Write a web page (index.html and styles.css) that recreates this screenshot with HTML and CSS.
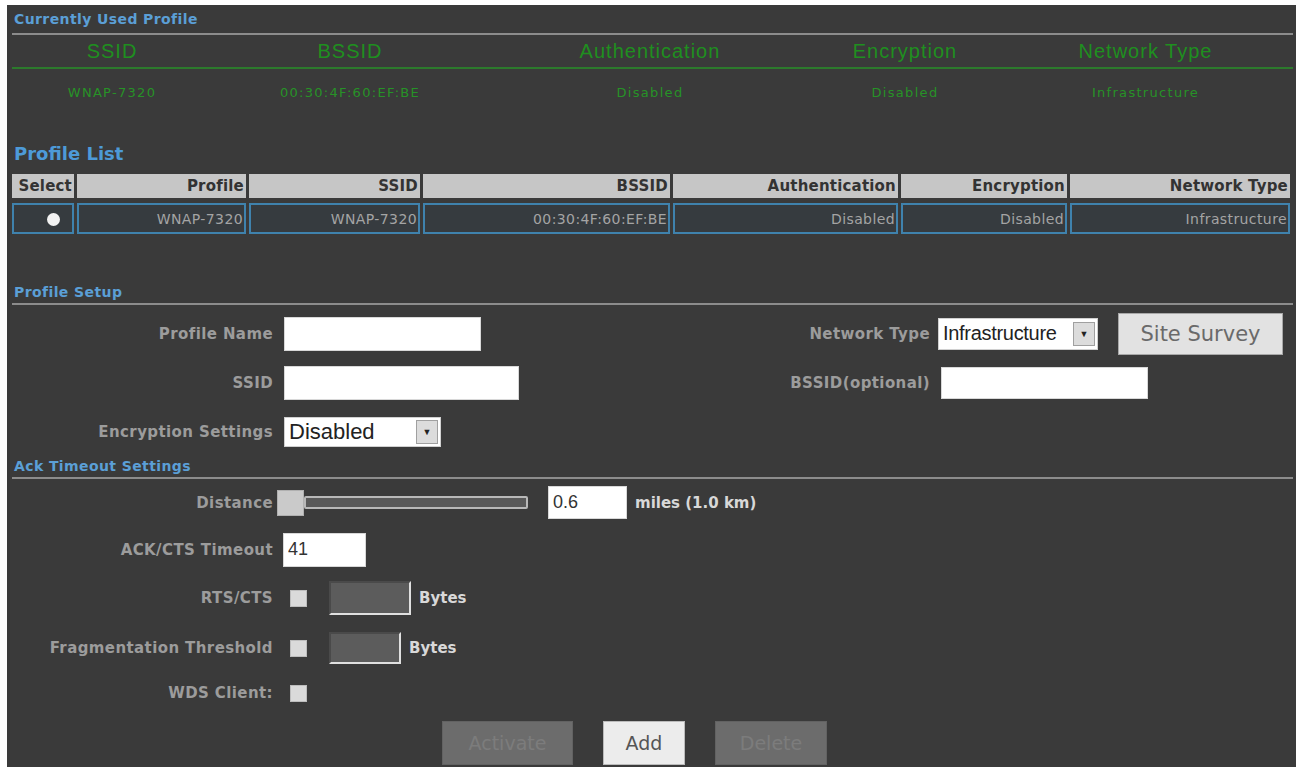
FILE: index.html
```html
<!DOCTYPE html>
<html>
<head>
  <title>Profile Settings</title>
  <link rel="stylesheet" href="styles.css">
</head>
<body>
  <div class="panel">
    <div class="section-title first">Currently Used Profile</div>
    <table class="current">
      <colgroup>
        <col style="width: 200px">
        <col style="width: 276px">
        <col style="width: 324px">
        <col style="width: 186px">
        <col>
      </colgroup>
      <thead>
        <tr>
          <th>SSID</th>
          <th>BSSID</th>
          <th>Authentication</th>
          <th>Encryption</th>
          <th>Network Type</th>
        </tr>
      </thead>
      <tbody>
        <tr>
          <td>WNAP-7320</td>
          <td>00:30:4F:60:EF:BE</td>
          <td>Disabled</td>
          <td>Disabled</td>
          <td>Infrastructure</td>
        </tr>
      </tbody>
    </table>

    <div class="list-title">Profile List</div>
    <table class="profiles">
      <colgroup>
        <col style="width: 62px">
        <col style="width: 169px">
        <col style="width: 171px">
        <col style="width: 247px">
        <col style="width: 225px">
        <col style="width: 166px">
        <col>
      </colgroup>
      <thead>
        <tr>
          <th>Select</th>
          <th>Profile</th>
          <th>SSID</th>
          <th>BSSID</th>
          <th>Authentication</th>
          <th>Encryption</th>
          <th>Network Type</th>
        </tr>
      </thead>
      <tbody>
        <tr>
          <td><span class="radio"></span></td>
          <td>WNAP-7320</td>
          <td>WNAP-7320</td>
          <td>00:30:4F:60:EF:BE</td>
          <td>Disabled</td>
          <td>Disabled</td>
          <td>Infrastructure</td>
        </tr>
      </tbody>
    </table>

    <div class="section-title setup-title">Profile Setup</div>
    <div class="form-grid setup">
      <label class="field-label">Profile Name</label>
      <div><input type="text" class="text-input name-input"></div>
      <label class="field-label right-label">Network Type</label>
      <div class="inline">
        <div class="select type-select">
          <span class="select-value">Infrastructure</span>
          <span class="select-arrow">&#9660;</span>
        </div>
        <button class="survey-btn">Site Survey</button>
      </div>

      <label class="field-label">SSID</label>
      <div><input type="text" class="text-input ssid-input"></div>
      <label class="field-label right-label">BSSID(optional)</label>
      <div><input type="text" class="text-input bssid-input"></div>

      <label class="field-label">Encryption Settings</label>
      <div>
        <div class="select enc-select">
          <span class="select-value">Disabled</span>
          <span class="select-arrow">&#9660;</span>
        </div>
      </div>
    </div>

    <div class="section-title ack-title">Ack Timeout Settings</div>
    <div class="form-grid ack">
      <label class="field-label">Distance</label>
      <div class="inline wide">
        <div class="slider">
          <span class="slider-thumb"></span>
          <span class="slider-track"></span>
        </div>
        <input type="text" class="text-input distance-input" value="0.6">
        <span class="unit">miles (1.0 km)</span>
      </div>

      <label class="field-label">ACK/CTS Timeout</label>
      <div class="wide"><input type="text" class="text-input ack-input" value="41"></div>

      <label class="field-label">RTS/CTS</label>
      <div class="inline wide">
        <span class="checkbox"></span>
        <span class="bytes-box rts-box"></span>
        <span class="unit">Bytes</span>
      </div>

      <label class="field-label">Fragmentation Threshold</label>
      <div class="inline wide">
        <span class="checkbox"></span>
        <span class="bytes-box frag-box"></span>
        <span class="unit">Bytes</span>
      </div>

      <label class="field-label">WDS Client:</label>
      <div class="inline wide">
        <span class="checkbox"></span>
      </div>
    </div>

    <div class="actions">
      <button class="action-btn disabled activate-btn">Activate</button>
      <button class="action-btn add-btn">Add</button>
      <button class="action-btn disabled delete-btn">Delete</button>
    </div>
  </div>
</body>
</html>
```

FILE: styles.css
```css
body {
  margin: 0;
  background-color: #ffffff;
  font-family: "DejaVu Sans", Verdana, sans-serif;
}
.panel {
  margin: 5px 0 0 7px;
  width: 1281px;
  height: 762px;
  padding: 0 3px 0 5px;
  background-color: #3a3a3a;
  overflow: hidden;
}

/* section headings */
.section-title {
  color: #5b9fd6;
  font-weight: bold;
  font-size: 14px;
  letter-spacing: 0.4px;
  line-height: 20px;
  padding-left: 2px;
  border-bottom: 2px solid #8c8c8c;
}
.section-title.first {
  padding-top: 4px;
  padding-bottom: 4px;
}
.setup-title {
  margin-top: 43px;
  padding-bottom: 1px;
}
.ack-title {
  padding-bottom: 1px;
}
.list-title {
  color: #4d9ad8;
  font-weight: bold;
  font-size: 18px;
  line-height: 20px;
  margin-top: 29px;
  padding-left: 2px;
}

/* currently used profile */
.current {
  width: 100%;
  border-collapse: collapse;
  table-layout: fixed;
}
.current th {
  color: #1f8f1f;
  font-family: "Liberation Sans", Arial, sans-serif;
  font-weight: normal;
  font-size: 20px;
  letter-spacing: 1px;
  height: 29px;
  padding-top: 2px;
  border-bottom: 2px solid #2c7a2c;
}
.current td {
  color: #279227;
  font-size: 13px;
  letter-spacing: 1.3px;
  text-align: center;
  height: 44px;
}

/* profile list */
.profiles {
  width: calc(100% + 3px);
  margin-left: -3px;
  margin-top: 5px;
  border-collapse: separate;
  border-spacing: 3px 5px;
  table-layout: fixed;
}
.profiles th {
  background-color: #c6c6c6;
  color: #333333;
  font-size: 15px;
  letter-spacing: 0.2px;
  text-align: right;
  height: 24px;
  padding: 0 2px 0 0;
}
.profiles td {
  border: 2px solid #3f82ad;
  background-color: #363b3f;
  color: #a4a4a4;
  font-size: 14px;
  letter-spacing: 0.4px;
  text-align: right;
  height: 27px;
  padding: 0 1px 0 0;
}
.radio {
  display: inline-block;
  width: 13px;
  height: 13px;
  margin-right: 11px;
  border-radius: 50%;
  background-color: #f2f2f2;
  vertical-align: middle;
}

/* form layout */
.form-grid {
  display: grid;
  grid-template-columns: 272px 316px 338px auto;
  grid-auto-rows: 49px;
  align-items: center;
}
.form-grid .wide {
  grid-column: 2 / -1;
}
.setup {
  padding-top: 4px;
}
.ack {
  grid-template-rows: 47px 47px 50px 50px 40px;
}
.field-label {
  color: #9c9c9c;
  font-size: 15px;
  font-weight: bold;
  letter-spacing: 0.4px;
  text-align: right;
  padding-right: 11px;
}
.right-label {
  padding-right: 8px;
}
.inline {
  display: flex;
  align-items: center;
}
.text-input {
  box-sizing: border-box;
  height: 34px;
  border: 1px solid #d8d8d8;
  background-color: #ffffff;
  font-family: "Liberation Sans", Arial, sans-serif;
  font-size: 19px;
  color: #333333;
  padding: 0 4px;
}
.name-input {
  width: 197px;
}
.ssid-input {
  width: 235px;
}
.bssid-input {
  width: 207px;
  height: 32px;
  margin-left: 3px;
}

/* dropdowns */
.select {
  box-sizing: border-box;
  display: flex;
  align-items: center;
  justify-content: space-between;
  background-color: #ffffff;
  border: 1px solid #d0d0d0;
  font-family: "Liberation Sans", Arial, sans-serif;
  color: #222222;
  padding: 0 2px 0 4px;
}
.type-select {
  width: 160px;
  height: 32px;
  font-size: 20px;
  letter-spacing: -0.3px;
}
.enc-select {
  width: 157px;
  height: 30px;
  font-size: 22px;
}
.select-arrow {
  box-sizing: border-box;
  width: 22px;
  height: 24px;
  background-color: #dcdcdc;
  border: 1px solid #a0a0a0;
  color: #222222;
  font-size: 9px;
  line-height: 22px;
  text-align: center;
  letter-spacing: 0;
}
.survey-btn {
  margin-left: 20px;
  width: 165px;
  height: 42px;
  background-color: #e2e2e2;
  border: 1px solid #a8a8a8;
  color: #6a6a6a;
  font-family: "DejaVu Sans", Verdana, sans-serif;
  font-size: 21px;
}

/* ack timeout */
.slider {
  display: flex;
  align-items: center;
  margin-left: -7px;
  width: 251px;
}
.slider-thumb {
  width: 27px;
  height: 26px;
  background-color: #cacaca;
  border: 1px solid #b0b0b0;
  box-sizing: border-box;
}
.slider-track {
  flex: 1;
  height: 13px;
  background-color: #595959;
  border: 2px solid #b8b8b8;
  border-radius: 2px;
  box-sizing: border-box;
}
.distance-input {
  width: 79px;
  height: 33px;
  margin-left: 20px;
  font-size: 18px;
}
.ack-input {
  width: 83px;
  font-size: 18px;
  margin-left: -1px;
}
.unit {
  color: #d8d8d8;
  font-size: 15px;
  font-weight: bold;
  margin-left: 8px;
}
.checkbox {
  width: 17px;
  height: 17px;
  margin-left: 6px;
  background-color: #dadada;
  border: 1px solid #bdbdbd;
  box-sizing: border-box;
}
.bytes-box {
  box-sizing: border-box;
  margin-left: 22px;
  height: 34px;
  background-color: #5c5c5c;
  border: 2px solid #4a4a4a;
  border-right-color: #e0e0e0;
  border-bottom-color: #e0e0e0;
}
.rts-box {
  width: 82px;
}
.frag-box {
  width: 72px;
  height: 32px;
}

/* bottom buttons */
.actions {
  display: flex;
  gap: 30px;
  padding-left: 430px;
  margin-top: 8px;
}
.action-btn {
  height: 44px;
  border: 1px solid #555555;
  font-family: "DejaVu Sans", Verdana, sans-serif;
  font-size: 19px;
  cursor: pointer;
}
.action-btn.disabled {
  background-color: #6c6c6c;
  color: #7c7c7c;
  border-color: #626262;
}
.activate-btn {
  width: 131px;
}
.add-btn {
  width: 82px;
  background-color: #ececec;
  color: #555555;
  border-color: #bbbbbb;
}
.delete-btn {
  width: 112px;
}
```
